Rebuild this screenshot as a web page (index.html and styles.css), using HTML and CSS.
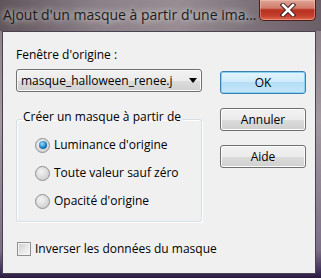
FILE: index.html
```html
<!DOCTYPE html>
<html lang="fr">
<head>
    <meta charset="UTF-8">
    <title>Ajout d'un masque à partir d'une image</title>
    <link rel="stylesheet" href="styles.css">
</head>
<body>
    <div class="window">
        <!-- Title bar -->
        <div class="titlebar">
            <span class="title">Ajout d'un masque à partir d'une ima...</span>
            <div class="close-btn">
                <svg width="16" height="14" viewBox="0 0 16 14">
                    <path d="M3 2 L13 12 M13 2 L3 12" stroke="#3a1a1a" stroke-width="4.5" stroke-linecap="square"/>
                    <path d="M3 2 L13 12 M13 2 L3 12" stroke="#fff" stroke-width="2.6" stroke-linecap="square"/>
                </svg>
            </div>
        </div>

        <!-- Dialog body -->
        <div class="client">
            <div class="left-col">
                <div class="label">Fenêtre d'origine :</div>
                <div class="combo">
                    <span class="combo-text">masque_halloween_renee.j</span>
                    <span class="combo-arrow"></span>
                </div>

                <fieldset class="group">
                    <legend>Créer un masque à partir de</legend>
                    <div class="option"><span class="radio checked"></span>Luminance d'origine</div>
                    <div class="option"><span class="radio"></span>Toute valeur sauf zéro</div>
                    <div class="option"><span class="radio"></span>Opacité d'origine</div>
                </fieldset>

                <div class="check-row"><span class="checkbox"></span>Inverser les données du masque</div>
            </div>

            <div class="right-col">
                <div class="btn btn-default">OK</div>
                <div class="btn">Annuler</div>
                <div class="btn">Aide</div>
            </div>
        </div>
    </div>
</body>
</html>
```

FILE: styles.css
```css
body {
    margin: 0;
    font-family: 'Open Sans', 'Noto Sans', sans-serif;
    font-size: 12px;
    color: #000;
    background: #000;
}

.window {
    width: 321px;
    height: 278px;
    display: flex;
    flex-direction: column;
    background: linear-gradient(180deg, #74686f 0, #8d8289 30px, #a29aa0 120px, #7c7086 250px, #3e2d57 272px, #2a1b40 278px);
    overflow: hidden;
}

/* Title bar */
.titlebar {
    height: 31px;
    display: flex;
    align-items: flex-start;
    background: linear-gradient(90deg, #5f555b 0, #8b8087 30%, #978d93 55%, #7b7077 80%, #6a5f66 100%);
}

.title {
    flex: 1;
    padding-left: 3px;
    margin-top: 6px;
    font-size: 14px;
    line-height: 18px;
    color: #1c1c1c;
    white-space: nowrap;
    text-shadow: 0 0 6px rgba(255, 255, 255, 0.7), 0 0 10px rgba(255, 255, 255, 0.5);
}

.close-btn {
    width: 57px;
    height: 21px;
    margin-right: 5px;
    box-sizing: border-box;
    border: 1px solid #4c1f1f;
    border-top: none;
    border-radius: 0 0 5px 5px;
    background: linear-gradient(180deg, #e0a496 0, #d27d6c 40%, #b8301f 50%, #c6402e 80%, #e06a4e 100%);
    box-shadow: inset 0 0 0 1px rgba(255, 220, 210, 0.35);
    display: flex;
    align-items: center;
    justify-content: center;
}

/* Client area */
.client {
    height: 243px;
    margin: 0 5px 0 2px;
    box-sizing: border-box;
    border: 1px solid #4a4250;
    background-color: #f0f0f0;
    display: flex;
    gap: 18px;
    padding: 15px 0 0 13px;
}

.left-col {
    width: 186px;
    display: flex;
    flex-direction: column;
}

.label {
    line-height: 16px;
    margin-bottom: 6px;
}

.combo {
    height: 23px;
    box-sizing: border-box;
    border: 1px solid #707070;
    border-radius: 3px;
    background: linear-gradient(180deg, #f2f2f2 0, #ebebeb 50%, #dddddd 50%, #cfcfcf 100%);
    box-shadow: inset 0 0 0 1px #fafafa;
    display: flex;
    align-items: center;
    padding-left: 4px;
    overflow: hidden;
}

.combo-text {
    width: 164px;
    overflow: hidden;
    white-space: nowrap;
    line-height: 16px;
}

.combo-arrow {
    margin-left: 4px;
    width: 0;
    height: 0;
    border-left: 4px solid transparent;
    border-right: 4px solid transparent;
    border-top: 5px solid #000;
}

/* Group box */
.group {
    margin: 17px 0 0 0;
    padding: 8px 0 12px 16px;
    border: 1px solid #d5dfe5;
    border-radius: 3px;
    box-shadow: 1px 1px 0 #fff, inset 1px 1px 0 #fff;
    display: flex;
    flex-direction: column;
    gap: 12px;
}

.group legend {
    margin-left: -11px;
    padding: 0 1px 4px 1px;
    line-height: 16px;
}

.option, .check-row {
    display: flex;
    align-items: center;
    line-height: 16px;
    height: 16px;
    white-space: nowrap;
}

.radio {
    flex-shrink: 0;
    width: 15px;
    height: 15px;
    box-sizing: border-box;
    border-radius: 50%;
    border: 1px solid #8e8f8f;
    background: radial-gradient(circle at 40% 35%, #f4f4f4 0, #d8d8d8 60%, #c8c8c8 100%);
    margin: 0 4px 0 2px;
    position: relative;
}

.radio.checked::after {
    content: '';
    position: absolute;
    left: 2.5px;
    top: 2.5px;
    width: 8px;
    height: 8px;
    border-radius: 50%;
    background: radial-gradient(circle at 40% 35%, #9be0ff 0, #1a7fc4 55%, #0a3f6e 100%);
}

.check-row {
    margin-top: 19px;
}

.checkbox {
    flex-shrink: 0;
    width: 14px;
    height: 14px;
    box-sizing: border-box;
    border: 1px solid #8e8f8f;
    background: linear-gradient(135deg, #cbcbcb 0, #eaeaea 60%, #f7f7f7 100%);
    box-shadow: inset 0 0 0 1px #f4f4f4;
    margin: 0 4px 0 1px;
}

/* Buttons */
.right-col {
    width: 86px;
    padding-top: 24px;
    display: flex;
    flex-direction: column;
    gap: 14px;
}

.btn {
    height: 23px;
    box-sizing: border-box;
    border: 1px solid #707070;
    border-radius: 3px;
    background: linear-gradient(180deg, #f2f2f2 0, #ebebeb 50%, #dddddd 50%, #cfcfcf 100%);
    box-shadow: inset 0 0 0 1px #fcfcfc;
    display: flex;
    align-items: center;
    justify-content: center;
    line-height: 16px;
}

.btn-default {
    border-color: #3c7fb1;
    background: linear-gradient(180deg, #e3f4fc 0, #cdebfa 50%, #b5def6 50%, #c6e6f8 100%);
    box-shadow: inset 0 0 0 1px #8ad2f5;
}
```
